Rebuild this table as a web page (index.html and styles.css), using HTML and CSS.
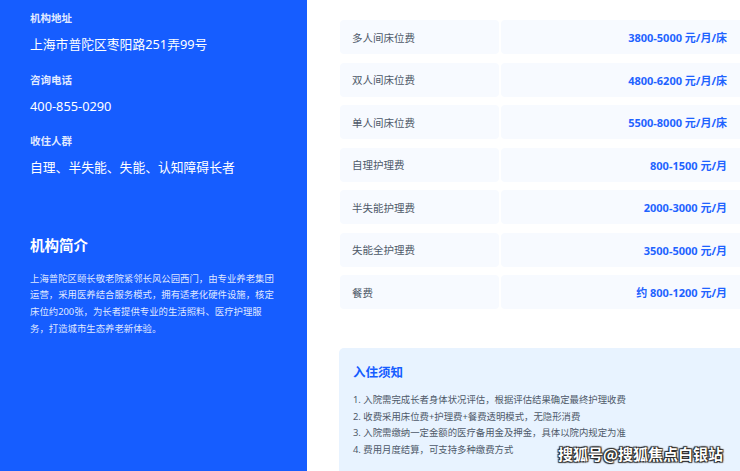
FILE: index.html
```html
<!DOCTYPE html>
<html lang="zh-CN">
<head>
<meta charset="utf-8">
<title>机构信息</title>
<link rel="stylesheet" href="styles.css">
</head>
<body>
<div class="page">
  <aside class="side">
    <div class="info">
      <div class="info-label">机构地址</div>
      <div class="info-value">上海市普陀区枣阳路251弄99号</div>
    </div>
    <div class="info">
      <div class="info-label">咨询电话</div>
      <div class="info-value">400-855-0290</div>
    </div>
    <div class="info">
      <div class="info-label">收住人群</div>
      <div class="info-value">自理、半失能、失能、认知障碍长者</div>
    </div>
    <h2 class="intro-title">机构简介</h2>
    <p class="intro-text">上海普陀区颐长敬老院紧邻长风公园西门，由专业养老集团运营，采用医养结合服务模式，拥有适老化硬件设施，核定床位约200张，为长者提供专业的生活照料、医疗护理服务，打造城市生态养老新体验。</p>
  </aside>
  <main class="main">
    <div class="fees">
      <div class="fee-row"><div class="fee-name">多人间床位费</div><div class="fee-price">3800-5000 元/月/床</div></div>
      <div class="fee-row"><div class="fee-name">双人间床位费</div><div class="fee-price">4800-6200 元/月/床</div></div>
      <div class="fee-row"><div class="fee-name">单人间床位费</div><div class="fee-price">5500-8000 元/月/床</div></div>
      <div class="fee-row"><div class="fee-name">自理护理费</div><div class="fee-price">800-1500 元/月</div></div>
      <div class="fee-row"><div class="fee-name">半失能护理费</div><div class="fee-price">2000-3000 元/月</div></div>
      <div class="fee-row"><div class="fee-name">失能全护理费</div><div class="fee-price">3500-5000 元/月</div></div>
      <div class="fee-row"><div class="fee-name">餐费</div><div class="fee-price">约 800-1200 元/月</div></div>
    </div>
    <section class="notice">
      <h3 class="notice-title">入住须知</h3>
      <ol class="notice-list">
        <li>1. 入院需完成长者身体状况评估，根据评估结果确定最终护理收费</li>
        <li>2. 收费采用床位费+护理费+餐费透明模式，无隐形消费</li>
        <li>3. 入院需缴纳一定金额的医疗备用金及押金，具体以院内规定为准</li>
        <li>4. 费用月度结算，可支持多种缴费方式</li>
      </ol>
    </section>
  </main>
</div>
<div class="watermark">搜狐号@搜狐焦点白银站</div>
</body>
</html>
```

FILE: styles.css
```css
html, body {
  margin: 0;
  padding: 0;
  overflow: hidden;
  background: #ffffff;
}
body {
  width: 740px;
  height: 471px;
  position: relative;
  font-family: "Noto Sans", "Noto Sans CJK SC", sans-serif;
}
.page {
  display: flex;
  width: 760px;
  height: 471px;
}
.side {
  width: 307px;
  flex: 0 0 307px;
  box-sizing: border-box;
  background: #165dff;
  color: #ffffff;
  padding: 10px 30px 0 30px;
}
.info {
  display: flex;
  flex-direction: column;
  gap: 8px;
  margin-bottom: 17.5px;
}
.info-label {
  font-size: 10.5px;
  line-height: 16px;
  font-weight: 700;
  color: rgba(255, 255, 255, 0.88);
}
.info-value {
  font-size: 12.8px;
  line-height: 20px;
  color: #ffffff;
}
.intro-title {
  margin: 58px 0 0 0;
  font-size: 14.5px;
  line-height: 20px;
  font-weight: 700;
}
.intro-text {
  margin: 15.5px 0 0 0;
  font-size: 9.4px;
  line-height: 16.7px;
  color: rgba(255, 255, 255, 0.88);
}
.main {
  flex: 1;
  padding: 20px 0 0 33px;
  display: flex;
  flex-direction: column;
}
.fees {
  display: flex;
  flex-direction: column;
  gap: 8.5px;
}
.fee-row {
  display: grid;
  grid-template-columns: 159px 1fr;
  gap: 2px;
  height: 34px;
}
.fee-name, .fee-price {
  background: #f7faff;
  border-radius: 4px;
  display: flex;
  align-items: center;
}
.fee-name {
  padding-left: 12px;
  font-size: 10.5px;
  color: #4e5969;
}
.fee-price {
  justify-content: flex-end;
  padding-right: 33px;
  font-size: 11px;
  font-weight: 700;
  color: #1f63ff;
}
.notice {
  margin-top: 39px;
  margin-left: -1px;
  flex: 1;
  background: #e8f3ff;
  border-radius: 5px 5px 0 0;
  padding: 15px 14px 0 14px;
}
.notice-title {
  margin: 0;
  font-size: 12.5px;
  line-height: 20px;
  font-weight: 700;
  color: #165dff;
}
.notice-list {
  list-style: none;
  margin: 9px 0 0 0;
  padding: 0;
  font-size: 9.4px;
  line-height: 16.7px;
  color: #4e5969;
}
.watermark {
  position: absolute;
  right: 17px;
  top: 444px;
  font-size: 15px;
  line-height: 20px;
  font-weight: 700;
  color: #ffffff;
  font-family: "Noto Sans CJK SC", sans-serif;
  text-shadow: 0 0 1px #000, 1px 1px 1px #333, -1px -1px 1px #333, 1px -1px 1px #333, -1px 1px 1px #333;
}
```
